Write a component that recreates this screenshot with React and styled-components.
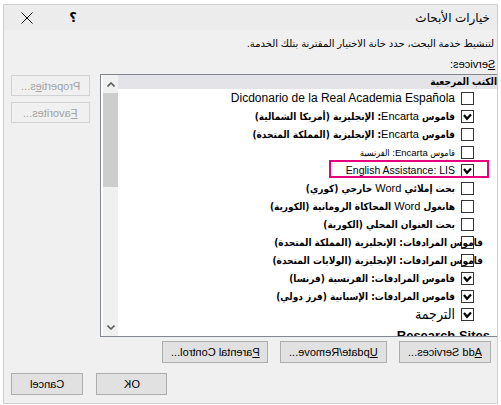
import React from "react";
import styled, { createGlobalStyle } from "styled-components";

const GlobalStyle = createGlobalStyle`
  html, body {
    margin: 0;
    padding: 0;
    background: #ffffff;
  }
  body {
    font-family: "Liberation Sans", "DejaVu Sans", sans-serif;
    color: #000;
  }
`;

// dialog frame
const Window = styled.div`
  box-sizing: border-box;
  width: 495px;
  height: 400px;
  margin: 4px 0 0 3px;
  border: 1px solid #cfcfcf;
  background: #f0f0f0;
  direction: rtl;
  display: flex;
  flex-direction: column;
  overflow: hidden;
`;

const TitleBar = styled.div`
  height: 25px;
  display: flex;
  align-items: center;
  background: #ececec;
`;

const Title = styled.div`
  flex: 1;
  padding-right: 7px;
  font-size: 12px;
`;

const CaptionButton = styled.div`
  width: 46px;
  height: 25px;
  display: flex;
  align-items: center;
  justify-content: center;
  font-size: 13px;
  font-weight: bold;
`;

const Body = styled.div`
  flex: 1;
  display: flex;
  flex-direction: column;
  padding: 0 0 0 7px;
`;

const Instruction = styled.div`
  margin-top: 8px;
  padding-right: 3px;
  height: 12px;
  line-height: 12px;
  font-size: 10px;
`;

const Label = styled.div`
  margin-top: 8px;
  padding-right: 2px;
  height: 12px;
  line-height: 12px;
  font-size: 11px;
`;

// mirrored Latin captions of the RTL window
const Flip = styled.span`
  display: inline-block;
  direction: ltr;
  transform: scaleX(-1);
`;

const MainRow = styled.div`
  margin-top: 4px;
  height: 263px;
  display: flex;
  gap: 10px;
`;

const ListBox = styled.div`
  flex: 1;
  margin-right: -3px;
  box-sizing: border-box;
  border: 1px solid #828790;
  background: #fff;
  display: flex;
  padding-left: 2px;
`;

const ListContent = styled.div`
  flex: 1;
  position: relative;
  overflow: hidden;
`;

const Scrollbar = styled.div`
  width: 15px;
  background: #f0f0f0;
  display: flex;
  flex-direction: column;
`;

const ScrollArrow = styled.div`
  height: 18px;
  display: flex;
  align-items: center;
  justify-content: center;
`;

const Thumb = styled.div`
  height: 94px;
  background: #cdcdcd;
`;

const Track = styled.div`
  flex: 1;
`;

const GroupHeader = styled.div`
  height: 14px;
  line-height: 14px;
  background: #e3e3e8;
  padding-right: 2px;
  font-family: "DejaVu Sans Condensed", "DejaVu Sans", sans-serif;
  font-size: 10px;
  font-weight: bold;
`;

const Row = styled.div`
  height: 18px;
  display: flex;
  align-items: center;
  gap: 6px;
  padding-right: 25px;
`;

const ItemText = styled.span`
  white-space: nowrap;
  font-size: ${p => p.$size || 12}px;
  margin-right: ${p => p.$shift || 0}px;
  position: relative;
`;

// Arabic captions: condensed bold face
const ArabicText = styled(ItemText)`
  font-family: "DejaVu Sans Condensed", "DejaVu Sans", sans-serif;
  font-weight: ${p => (p.$light ? "normal" : "bold")};
`;

const Latin = styled.span`
  font-family: "Liberation Sans", sans-serif;
  font-weight: normal;
  font-size: ${p => p.$size || 11}px;
`;

const Box = styled.div`
  box-sizing: border-box;
  width: 13px;
  height: 13px;
  flex: none;
  border: 1px solid #333;
  background: #fff;
  display: flex;
  align-items: center;
  justify-content: center;
`;

const SectionRow = styled.div`
  height: 18px;
  line-height: 18px;
  margin-top: 4px;
  padding-right: 9px;
  font-size: 13px;
  font-weight: bold;
`;

const Highlight = styled.div`
  position: absolute;
  top: 85px;
  right: 10px;
  width: 160px;
  height: 18px;
  box-sizing: border-box;
  border: 2px solid #e6007e;
  pointer-events: none;
`;

const SideColumn = styled.div`
  width: 79px;
  display: flex;
  flex-direction: column;
  gap: 6px;
  padding-top: 1px;
`;

const Button = styled.div`
  box-sizing: border-box;
  width: ${p => p.$w}px;
  height: ${p => p.$h || 22}px;
  display: flex;
  align-items: center;
  justify-content: center;
  font-size: 11px;
  background: ${p => (p.$disabled ? "#f0f0f0" : "#e1e1e1")};
  border: 1px solid ${p => (p.$disabled ? "#d2d2d2" : "#adadad")};
  color: ${p => (p.$disabled ? "#a3a3a3" : "#000")};
`;

const ButtonRow = styled.div`
  margin-top: 4px;
  display: flex;
  gap: 12px;
  padding-right: 6px;
`;

const FooterRow = styled.div`
  margin-top: 10px;
  display: flex;
  justify-content: flex-end;
  gap: 13px;
`;

const Check = ({ on }) => (
  <Box>
    {on && (
      <svg width="11" height="11" viewBox="0 0 11 11">
        <path d="M2 4 L5 7.8 L9 3.4" fill="none" stroke="#000" strokeWidth="2.2" />
      </svg>
    )}
  </Box>
);

const Item = ({ on, children, ...rest }) => (
  <Row>
    <Check on={on} />
    <ItemText {...rest}>{children}</ItemText>
  </Row>
);

const ArabicItem = ({ on, children, ...rest }) => (
  <Row>
    <Check on={on} />
    <ArabicText {...rest}>{children}</ArabicText>
  </Row>
);

const Chevron = ({ down }) => (
  <svg width="8" height="5" viewBox="0 0 8 5">
    <path
      d={down ? "M0.5 0.5 L4 4 L7.5 0.5" : "M0.5 4.5 L4 1 L7.5 4.5"}
      fill="none"
      stroke="#606060"
      strokeWidth="1.6"
    />
  </svg>
);

export default function App() {
  return (
    <>
      <GlobalStyle />
      <Window>
        <TitleBar>
          <Title>خيارات الأبحاث</Title>
          <CaptionButton>؟</CaptionButton>
          <CaptionButton>
            <svg width="12" height="12" viewBox="0 0 12 12">
              <path d="M0.5 0.5 L11.5 11.5 M11.5 0.5 L0.5 11.5" stroke="#111" strokeWidth="1" />
            </svg>
          </CaptionButton>
        </TitleBar>
        <Body>
          <Instruction>لتنشيط خدمة البحث، حدد خانة الاختيار المقترنة بتلك الخدمة.</Instruction>
          <Label>
            <Flip>
              <u>S</u>ervices:
            </Flip>
          </Label>
          <MainRow>
            <ListBox>
              <ListContent>
                <GroupHeader>الكتب المرجعية</GroupHeader>
                <Item>Dicdonario de la Real Academia Española</Item>
                <ArabicItem on $size={10}>
                  قاموس <Latin>Encarta</Latin>: الإنجليزية (أمريكا الشمالية)
                </ArabicItem>
                <ArabicItem $size={10}>
                  قاموس <Latin>Encarta</Latin>: الإنجليزية (المملكة المتحدة)
                </ArabicItem>
                <ArabicItem $size={9} $light>
                  قاموس <Latin $size={9.5}>Encarta</Latin>: الفرنسية
                </ArabicItem>
                <Item on $size={10.5}>English Assistance: LIS</Item>
                <ArabicItem $size={10}>
                  بحث إملائي <Latin>Word</Latin> خارجي (كوري)
                </ArabicItem>
                <ArabicItem $size={10}>
                  هانغول <Latin>Word</Latin> المحاكاة الرومانية (الكورية)
                </ArabicItem>
                <ArabicItem $size={10}>بحث العنوان المحلي (الكورية)</ArabicItem>
                <ArabicItem $size={10} $shift={-28}>قاموس المرادفات: الإنجليزية (المملكة المتحدة)</ArabicItem>
                <ArabicItem $size={10} $shift={-28}>قاموس المرادفات: الإنجليزية (الولايات المتحدة)</ArabicItem>
                <ArabicItem on $size={10}>قاموس المرادفات: الفرنسية (فرنسا)</ArabicItem>
                <ArabicItem on $size={10}>قاموس المرادفات: الإسبانية (فرز دولي)</ArabicItem>
                <ArabicItem on $size={14} $light>الترجمة</ArabicItem>
                <SectionRow>Research Sites</SectionRow>
                <Highlight />
              </ListContent>
              <Scrollbar>
                <ScrollArrow>
                  <Chevron />
                </ScrollArrow>
                <Thumb />
                <Track />
                <ScrollArrow>
                  <Chevron down />
                </ScrollArrow>
              </Scrollbar>
            </ListBox>
            <SideColumn>
              <Button $w={79} $h={21} $disabled>
                <Flip>
                  Properti<u>e</u>s...
                </Flip>
              </Button>
              <Button $w={79} $h={21} $disabled>
                <Flip>
                  <u>F</u>avorites...
                </Flip>
              </Button>
            </SideColumn>
          </MainRow>
          <ButtonRow>
            <Button $w={92}>
              <Flip>
                <u>A</u>dd Services...
              </Flip>
            </Button>
            <Button $w={107}>
              <Flip>
                <u>U</u>pdate/Remove...
              </Flip>
            </Button>
            <Button $w={106}>
              <Flip>
                <u>P</u>arental Control...
              </Flip>
            </Button>
          </ButtonRow>
          <FooterRow>
            <Button $w={71}>
              <Flip>OK</Flip>
            </Button>
            <Button $w={72}>
              <Flip>Cancel</Flip>
            </Button>
          </FooterRow>
        </Body>
      </Window>
    </>
  );
}
